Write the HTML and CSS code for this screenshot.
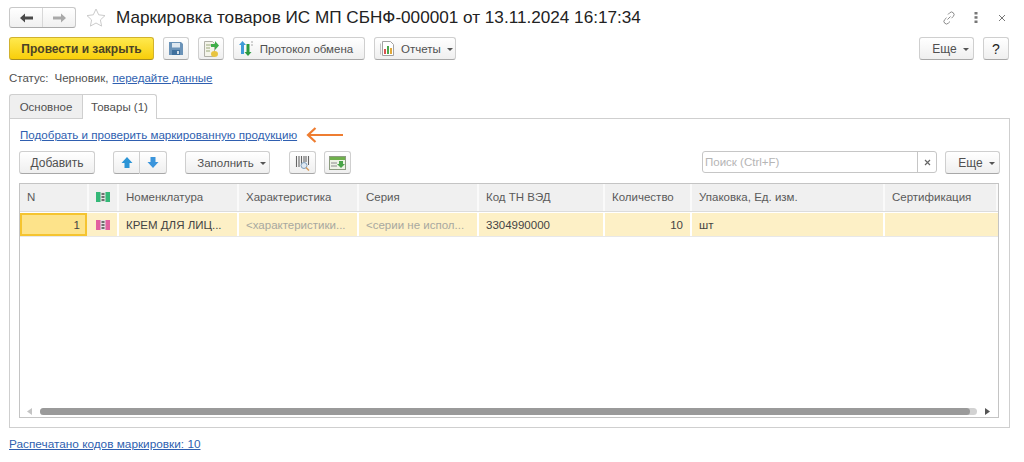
FILE: index.html
```html
<!DOCTYPE html>
<html lang="ru">
<head>
<meta charset="utf-8">
<title>Маркировка товаров</title>
<link rel="stylesheet" href="styles.css">
</head>
<body>
<div class="page">
  <header class="titlebar">
    <div class="nav">
      <button class="nav-btn nav-first"><svg width="13" height="10" viewBox="0 0 13 10"><path d="M0 5l5-4.500V3.500h8v3H5v3z" fill="#4a4a4a"/></svg></button>
      <button class="nav-btn"><svg width="13" height="10" viewBox="0 0 13 10"><path d="M13 5L8 .5V3.500H0v3h8v3z" fill="#a9a9a9"/></svg></button>
    </div>
    <svg class="star" width="20" height="19" viewBox="0 0 20 19"><path d="M10 1l2.700 5.800 6.300.8-4.600 4.300 1.200 6.200-5.600-3.100-5.600 3.100 1.200-6.200L1 7.600l6.300-.8z" fill="#fff" stroke="#cbcbcb"/></svg>
    <h1 class="title">Маркировка товаров ИС МП СБНФ-000001 от 13.11.2024 16:17:34</h1>
    <div class="win-icons">
      <svg class="link-icon" width="14" height="14" viewBox="0 0 14 14" fill="none" stroke="#8a8a8a"><path d="M5.500 8.500l3-3M6 3.500l1.700-1.700a2.500 2.500 0 0 1 3.600 3.600L9.500 7.200M8 10.500l-1.700 1.700a2.500 2.500 0 0 1-3.600-3.600L4.500 6.800"/></svg>
      <svg width="4" height="11" viewBox="0 0 4 11" fill="#777"><rect x="0.500" y="0" width="3" height="2.500"/><rect x="0.500" y="4.200" width="3" height="2.500"/><rect x="0.500" y="8.500" width="3" height="2.500"/></svg>
      <svg width="8" height="8" viewBox="0 0 8 8" stroke="#777"><path d="M1 1l6 6M7 1L1 7"/></svg>
    </div>
  </header>

  <div class="toolbar">
    <button class="btn primary">Провести и закрыть</button>
    <button class="btn icon-btn"><svg width="14" height="13" viewBox="0 0 14 13"><path d="M0 0h12l2 2v11H0z" fill="#6b93b8"/><rect x="3" y="1" width="8" height="4.500" fill="#dfe8f0"/><rect x="3" y="8" width="8" height="5" fill="#3f6f9c"/><rect x="8" y="9" width="2" height="3" fill="#cfdbe6"/></svg></button>
    <button class="btn icon-btn"><svg width="15" height="16" viewBox="0 0 15 16"><path d="M.5.500h8l2 2v13H.5z" fill="#f4f4ea" stroke="#b0b0a8"/><path d="M2 4h5M2 7h4M2 10h4" stroke="#9aa87a"/><path d="M7 3h4V0l4 4.500L11 9V6H7z" fill="#3fae49"/><ellipse cx="10.500" cy="13" rx="3.500" ry="3" fill="#e8c440"/></svg></button>
    <button class="btn text-icon protocol"><svg class="no-shrink" width="14" height="15" viewBox="0 0 14 15"><path d="M3.500 0L7 4H5v9H2V4H0z" fill="#3f9bd8"/><path d="M9 15l-3.500-4h2V3h3v8h2z" fill="#2c9a3f"/><path d="M12 1h2M12 4h2" stroke="#aaa"/></svg>Протокол обмена</button>
    <button class="btn text-icon reports"><svg class="no-shrink" width="14" height="15" viewBox="0 0 14 15"><path d="M2.500.500h8l3 3v11h-11z" fill="#fff" stroke="#a2a2a2"/><path d="M.5 2.500v11" stroke="#c4c4c4"/><rect x="4" y="8" width="2" height="5" fill="#d9534f"/><rect x="7" y="5" width="2" height="8" fill="#4ca64c"/><rect x="10" y="7" width="2" height="6" fill="#e0a83a"/></svg>Отчеты<i class="caret"></i></button>
    <button class="btn more push">Еще<i class="caret"></i></button>
    <button class="btn help">?</button>
  </div>

  <div class="status"><span class="status-label">Статус:</span><span>Черновик,</span><a href="#">передайте данные</a></div>

  <div class="tabs">
    <div class="tab">Основное</div>
    <div class="tab active">Товары (1)</div>
  </div>

  <section class="panel">
    <div class="link-row">
      <a class="pick" href="#">Подобрать и проверить маркированную продукцию</a>
      <svg class="orange-arrow" width="38" height="18" viewBox="0 0 38 18" fill="none" stroke="#ee7d31" stroke-width="2.200"><path d="M37 9H2M9.500 2L2 9l7.500 7"/></svg>
    </div>
    <div class="table-tools">
      <button class="btn add">Добавить</button>
      <div class="updown">
        <button class="btn ud ud-l"><svg width="12" height="13" viewBox="0 0 12 13"><path d="M6 1l5.500 6H8.500v5h-5V7H.5z" fill="#2c95d6"/></svg></button>
        <button class="btn ud ud-r"><svg width="12" height="13" viewBox="0 0 12 13"><path d="M6 12L.5 6h3V1h5v5h3z" fill="#3b95dc"/></svg></button>
      </div>
      <button class="btn fill">Заполнить<i class="caret"></i></button>
      <button class="btn tool tool-first"><svg width="15" height="16" viewBox="0 0 15 16"><path d="M1.500 1v11M4 1v11M6.500 1v8M9 1v6M11 1v6M13.500 1v9" stroke="#666" stroke-width="1.100"/><circle cx="9" cy="10.500" r="3" fill="#dfe9f2" stroke="#7f9db8"/><path d="M11 12.500l3 3" stroke="#d69a5a" stroke-width="1.500"/></svg></button>
      <button class="btn tool"><svg width="17" height="14" viewBox="0 0 17 14"><rect x=".5" y=".5" width="16" height="13" fill="#eef3e6" stroke="#8c9c80"/><rect x="1" y="1" width="15" height="3" fill="#6fb04c"/><path d="M2 7h6M2 10h6" stroke="#8a8a8a"/><path d="M10 5h4v3h2l-4 4-4-4h2z" fill="#4aa548"/></svg></button>
      <div class="search push">
        <input class="search-input" type="text" placeholder="Поиск (Ctrl+F)">
        <span class="search-x"><svg width="7" height="7" viewBox="0 0 7 7" stroke="#666" stroke-width="1.200"><path d="M1 1l5 5M6 1L1 6"/></svg></span>
      </div>
      <button class="btn more more-2">Еще<i class="caret"></i></button>
    </div>

    <div class="table">
      <div class="grid head">
        <div class="cell">N</div>
        <div class="cell center"><svg width="14" height="10" viewBox="0 0 14 10"><rect width="14" height="10" fill="#35b878"/><rect x="4.500" width="5" height="10" fill="#e4e4e4"/><path d="M5.500 1h3v2h-3zM5.500 4h3v2h-3zM5.500 7h3v2h-3z" fill="#6e6e6e"/></svg></div>
        <div class="cell">Номенклатура</div>
        <div class="cell">Характеристика</div>
        <div class="cell">Серия</div>
        <div class="cell">Код ТН ВЭД</div>
        <div class="cell">Количество</div>
        <div class="cell">Упаковка, Ед. изм.</div>
        <div class="cell">Сертификация</div>
      </div>
      <div class="grid row">
        <div class="cell num current">1</div>
        <div class="cell center"><svg width="14" height="10" viewBox="0 0 14 10"><rect width="14" height="10" fill="#e2609f"/><rect x="4.500" width="5" height="10" fill="#e4e4e4"/><path d="M5.500 1h3v2h-3zM5.500 4h3v2h-3zM5.500 7h3v2h-3z" fill="#6e6e6e"/></svg></div>
        <div class="cell">КРЕМ ДЛЯ ЛИЦ...</div>
        <div class="cell muted">&lt;характеристики...</div>
        <div class="cell muted">&lt;серии не испол...</div>
        <div class="cell">3304990000</div>
        <div class="cell num">10</div>
        <div class="cell">шт</div>
        <div class="cell"></div>
      </div>
      <div class="scrollbar">
        <svg width="5" height="7" viewBox="0 0 5 7"><path d="M5 0v7L0 3.500z" fill="#c4c4c4"/></svg>
        <div class="track"><div class="thumb"></div></div>
        <svg width="5" height="7" viewBox="0 0 5 7"><path d="M0 0v7l5-3.500z" fill="#555"/></svg>
      </div>
    </div>
  </section>

  <footer class="foot"><a href="#">Распечатано кодов маркировки: 10</a></footer>
</div>
</body>
</html>
```

FILE: styles.css
```css
* { box-sizing: border-box; }
html, body { margin: 0; background: #fff; }
body { font: 11.500px "Liberation Sans", Arial, sans-serif; color: #505050; overflow: hidden; }
a { color: #2f5fb0; text-decoration: underline; }
.page { width: 1024px; height: 462px; padding: 7px 15px 0 9px; display: flex; flex-direction: column; }

.titlebar { display: flex; align-items: center; height: 21px; }
.nav { display: flex; width: 67px; height: 21px; border: 1px solid #c8c8c8; border-bottom-color: #aaa; border-radius: 3px; background: linear-gradient(#fff, #f0f0f0); }
.nav-btn { flex: 1; border: 0; padding: 0; background: none; display: flex; align-items: center; justify-content: center; }
.nav-first { border-right: 1px solid #d8d8d8; }
.star { margin-left: 10px; }
.title { margin: 0 0 0 10px; font-size: 17.150px; font-weight: 400; color: #222; white-space: nowrap; }
.win-icons { margin-left: auto; display: flex; align-items: center; gap: 20px; padding-right: 3px; }
.link-icon { margin-right: -2px; }

.btn { height: 23px; padding: 0; border: 1px solid #cfcfcf; border-bottom-color: #a8a8a8; border-radius: 3px; background: linear-gradient(#fff, #efefef); font: inherit; color: #505050; display: inline-flex; align-items: center; justify-content: center; white-space: nowrap; }
.caret { display: inline-block; margin-left: 6px; margin-top: 2px; border: 3px solid transparent; border-top-color: #555; border-bottom: 0; }
.push { margin-left: auto; }
.no-shrink { flex: none; }

.toolbar { display: flex; gap: 9px; margin-top: 9px; }
.primary { width: 145px; background: linear-gradient(#ffe94e, #f8ce0a); border-color: #d1b22e; border-bottom-color: #a98f1f; color: #4a4226; font-size: 12px; font-weight: 700; }
.icon-btn { width: 26px; }
.text-icon { width: 132px; gap: 7px; }
.protocol { padding-right: 6px; }
.reports { width: 82px; justify-content: flex-start; padding-left: 5px; }
.reports .caret { margin-left: -1px; }
.more { width: 55px; padding-left: 8px; font-size: 12px; }
.help { width: 26px; font-size: 14px; color: #222; }

.status { margin-top: 11px; height: 14px; display: flex; gap: 4px; align-items: center; }
.status-label { margin-right: 2px; }

.tabs { display: flex; margin-top: 9px; height: 25px; position: relative; z-index: 1; }
.tab { width: 73px; height: 24px; display: flex; align-items: center; justify-content: center; background: #efefef; border: 1px solid #cfcfcf; border-right: 0; border-bottom: 0; border-radius: 3px 0 0 0; }
.tab.active { width: 75px; height: 25px; background: #fff; border-right: 1px solid #cfcfcf; border-radius: 0 3px 0 0; }

.panel { margin-top: -1px; width: 1001px; height: 310px; border: 1px solid #cfcfcf; padding: 0 9px; display: flex; flex-direction: column; }
.link-row { height: 32px; padding-top: 9px; display: flex; align-items: flex-start; gap: 9px; padding-left: 1px; }
.pick { font-size: 11.600px; }
.orange-arrow { margin-top: -2px; }

.table-tools { display: flex; height: 23px; }
.add { width: 76px; font-size: 12px; }
.updown { display: flex; margin-left: 18px; }
.ud { width: 27px; }
.ud-l { border-radius: 3px 0 0 3px; }
.ud-r { border-radius: 0 3px 3px 0; border-left: 0; }
.fill { width: 85px; margin-left: 18px; padding-left: 8px; }
.tool { width: 27px; margin-left: 8px; }
.tool-first { margin-left: 19px; }
.search { width: 235px; height: 22px; display: flex; border: 1px solid #c6c6c6; border-radius: 3px; }
.search-input { flex: 1; min-width: 0; border: 0; outline: 0; padding: 0 2px; font: inherit; background: none; }
.search-input::placeholder { color: #b5b5b5; }
.search-x { width: 19px; border-left: 1px solid #c6c6c6; display: flex; align-items: center; justify-content: center; }
.more-2 { margin-left: 8px; }

.table { margin-top: 9px; width: 980px; height: 235px; border: 1px solid #c4c4c4; display: flex; flex-direction: column; }
.grid { display: grid; grid-template-columns: 69px 30px 120px 120px 120px 126px 87px 193px 113px; }
.head { height: 28px; background: #f0f0f0; border-bottom: 1px solid #dcdcdc; color: #5a5a5a; }
.row { height: 25px; background: #fdf0c6; border-top: 1px solid #fff; border-bottom: 1px solid #e8e8e8; color: #444; }
.cell { display: flex; align-items: center; padding: 0 7px; border-right: 2px solid #fff; white-space: nowrap; overflow: hidden; }
.cell:last-child { border-right: 0; }
.head .cell { padding-bottom: 2px; border-right: 2px solid #fafafa; }
.center { justify-content: center; padding: 0; }
.num { justify-content: flex-end; }
.muted { color: #a8a8a0; }
.current { background: #fde38a; box-shadow: inset 0 0 0 2px #f5c430; border-right: 0; margin-right: 2px; }

.scrollbar { margin-top: auto; height: 7px; margin-bottom: 2px; padding: 0 8px 0 7px; display: flex; align-items: center; gap: 8px; }
.track { flex: 1; height: 7px; background: #d2d2d2; border-radius: 4px; }
.thumb { width: 930px; height: 7px; background: #9a9a9a; border-radius: 4px; }

.foot { margin-top: 9px; height: 14px; font-size: 11.800px; }
```
